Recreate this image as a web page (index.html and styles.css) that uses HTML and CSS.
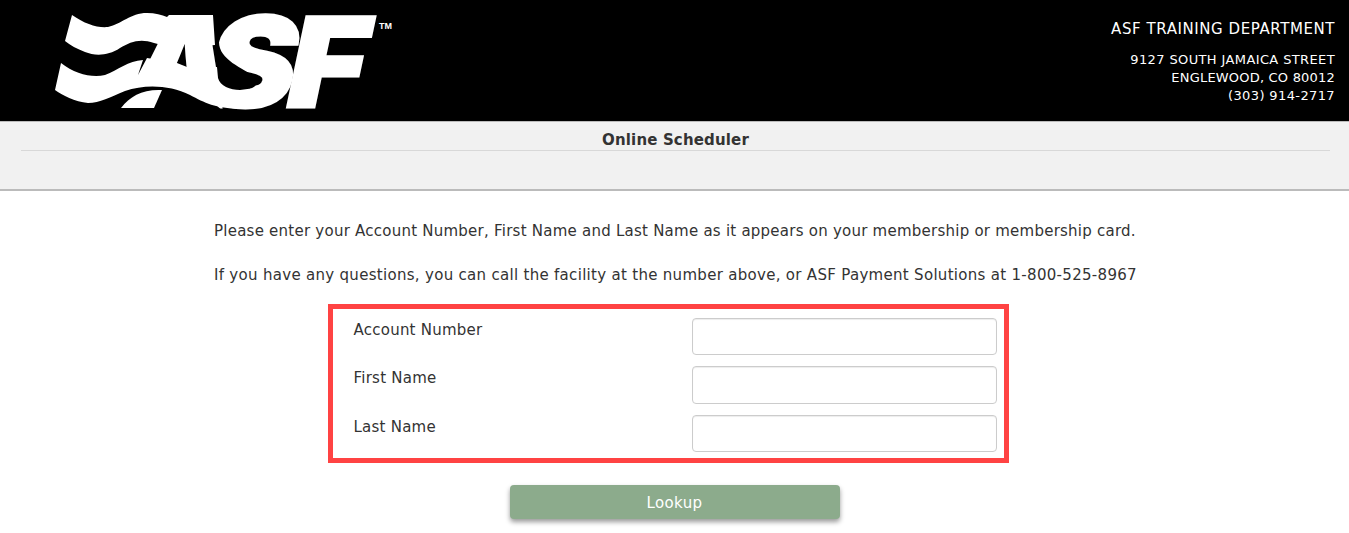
FILE: index.html
```html
<!DOCTYPE html>
<html lang="en">
<head>
    <meta charset="UTF-8">
    <meta name="viewport" content="width=device-width, initial-scale=1.0">
    <title>Online Scheduler</title>
    <link rel="stylesheet" href="styles.css">
</head>
<body>
    <!-- Header -->
    <header class="header">
        <svg class="logo" width="360" height="121" viewBox="40 0 360 121" role="img" aria-label="ASF">
            <text class="logo-letter" transform="translate(125 106.5) skewX(-10)">A</text>
            <text class="logo-letter" transform="translate(200.5 107) skewX(-12) scale(1.07 1.01)">S</text>
            <!-- space between the letters and below the waves -->
            <path class="wave-gap" d="M213 15 L219 42 C219 60 243 68 255 77 C262 84 252 90 240 91 L218 90 Z"/>
            <path class="wave-gap" d="M118 113 V92 L150 84 L195 90 L215 104 L225 113 Z"/>
            <path class="wave" d="M121 108 C130 96 143 89 162 90 L154 108 Z"/>
            <path class="wave" d="M72 15 C85 24 97 28 108 27 C122 24 130 13 147 13 C155 13 162 15 167 17 L169 15 H213 L215 45 L189 47 L185 43 L181 50 L154 43 C140 38 130 42 120 48 C108 56 95 56 85 52 C77 49 70 45 65 41 Z"/>
            <path class="wave" d="M61 63 C75 74 92 78 105 75 C118 70 128 61 143 60 L138 75 L147 58 L177 63 L192 69 L217 67 L218 78 C220 86 230 90 240 90 L255 88 L255 108 L240 109 C215 108 205 103 190 95 C170 85 145 84 125 91 C110 97 100 103 88 103 C75 102 62 95 55 90 Z"/>
            <text class="logo-letter" transform="translate(281.5 106.5) skewX(-12) scale(1.07 1)">F</text>
            <text class="logo-tm" x="379" y="28.5">TM</text>
        </svg>
        <div class="facility">
            <div class="facility-name">ASF TRAINING DEPARTMENT</div>
            <div class="facility-address">
                9127 SOUTH JAMAICA STREET<br>
                <span class="city">ENGLEWOOD, CO 80012</span><br>
                (303) 914-2717
            </div>
        </div>
    </header>

    <!-- Title Bar -->
    <div class="title-bar">
        <h1>Online Scheduler</h1>
    </div>

    <!-- Lookup Form -->
    <main class="container">
        <p>Please enter your Account Number, First Name and Last Name as it appears on your membership or membership card.</p>
        <p class="questions">If you have any questions, you can call the facility at the number above, or ASF Payment Solutions at 1-800-525-8967</p>

        <form class="lookup-form">
            <div class="fields">
                <label for="account">Account Number</label>
                <input type="text" id="account">
                <label for="first">First Name</label>
                <input type="text" id="first">
                <label for="last">Last Name</label>
                <input type="text" id="last">
            </div>
            <button type="button" class="lookup-btn">Lookup</button>
        </form>
    </main>
</body>
</html>
```
FILE: styles.css
```css
/* General Page Styling */
* {
    box-sizing: border-box;
}

body {
    margin: 0;
    min-height: 533px;
    font-family: Verdana, 'DejaVu Sans', sans-serif;
    font-size: 15px;
    line-height: 22px;
    letter-spacing: 0.24px;
    color: #333;
    background-color: #fff;
}

/* Header */
.header {
    display: flex;
    justify-content: space-between;
    height: 121px;
    padding: 0 14px 0 40px;
    background-color: #000;
    color: #fff;
}

.logo {
    display: block;
    overflow: visible;
    letter-spacing: 0;
}

.wave,
.logo-letter,
.logo-tm {
    fill: #fff;
}

.wave-gap {
    fill: #000;
}

.logo-letter {
    font-family: Inter, 'Open Sans', sans-serif;
    font-weight: 900;
    font-size: 124px;
    stroke: #fff;
    stroke-width: 3;
}

.logo-tm {
    font-family: 'Liberation Sans', sans-serif;
    font-weight: bold;
    font-size: 9px;
}

.facility {
    padding-top: 18px;
    text-align: right;
}

.facility-name {
    margin-bottom: 11px;
    letter-spacing: 0.57px;
}

.facility-address {
    font-size: 13px;
    line-height: 18px;
    letter-spacing: 0.38px;
}

.facility-address .city {
    letter-spacing: 0.2px;
}

/* Title Bar */
.title-bar {
    height: 70px;
    padding: 8px 19px 0 21px;
    border-top: 1px solid #bbb;
    border-bottom: 2px solid #bbb;
    background-color: #f1f1f1;
}

.title-bar h1 {
    margin: 0;
    border-bottom: 1px solid #d8d8d8;
    font-size: 15px;
    line-height: 20px;
    letter-spacing: 0.15px;
    text-align: center;
}

/* Instructions */
.container {
    padding-top: 29px;
}

.container p {
    margin: 0 0 22px 214px;
    white-space: nowrap;
}

.container .questions {
    margin-bottom: 18px;
    letter-spacing: 0.3px;
}

/* Form */
.lookup-form {
    display: flex;
    flex-direction: column;
    align-items: center;
}

.fields {
    display: grid;
    grid-template-columns: 338.5px 305px;
    align-content: start;
    row-gap: 11px;
    width: 681px;
    height: 159px;
    margin: 0 12px 22px 0;
    padding: 8.9px 0 0 20.5px;
    border: 5px solid #ff4343;
}

.fields label {
    padding-top: 1px;
}

.fields input {
    width: 305px;
    height: 37.5px;
    border: 1px solid #ccc;
    border-radius: 4px;
    box-shadow: inset 0 1px 1px rgba(0, 0, 0, 0.075);
}

.lookup-btn {
    width: 330px;
    height: 34px;
    padding-top: 3px;
    border: none;
    border-radius: 4px;
    background-color: #8cab8c;
    box-shadow: 0 3px 5px rgba(0, 0, 0, 0.4);
    color: #fff;
    font: inherit;
    letter-spacing: 0.4px;
    cursor: pointer;
}
```
